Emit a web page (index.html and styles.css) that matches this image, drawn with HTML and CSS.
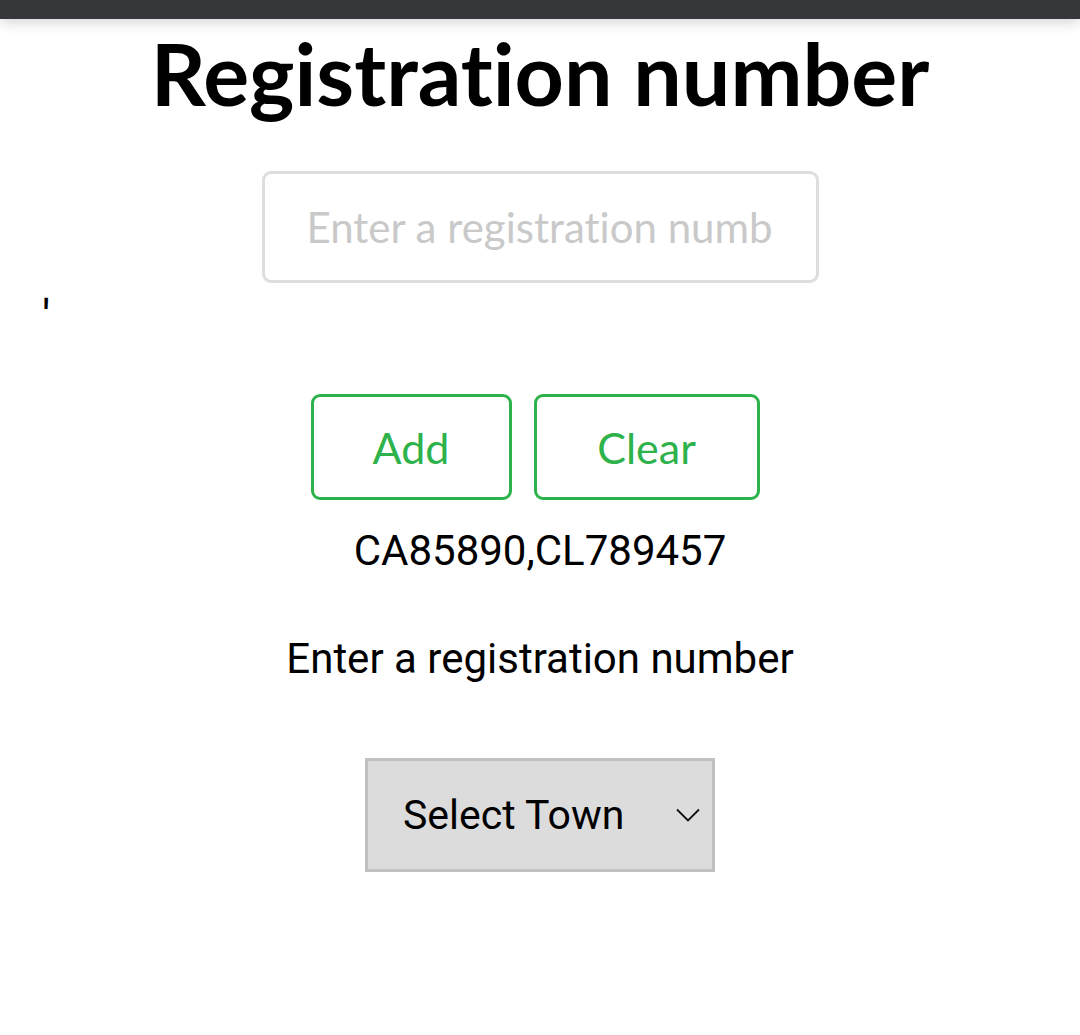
FILE: index.html
```html
<!DOCTYPE html>
<html>
<head>
<meta charset="utf-8">
<link rel="stylesheet" href="styles.css">
</head>
<body>
<div class="topbar"></div>
<main class="page">
  <h1 class="title">Registration number</h1>
  <input class="reg-input" type="text" placeholder="Enter a registration number">
  <div class="stray">'</div>
  <div class="actions">
    <button class="btn btn-add">Add</button>
    <button class="btn btn-clear">Clear</button>
  </div>
  <p class="regs">CA85890,CL789457</p>
  <p class="message">Enter a registration number</p>
  <div class="select-wrap">
    <div class="select">
      <span class="select-label">Select Town</span>
      <svg class="chevron" width="24" height="14" viewBox="0 0 24 14"><path d="M1 1.5 L12 12.5 L23 1.5" fill="none" stroke="#111" stroke-width="1.8"/></svg>
    </div>
  </div>
</main>
</body>
</html>
```
FILE: styles.css
```css
html, body {
  margin: 0;
  padding: 0;
  background: #ffffff;
}
.topbar {
  height: 19px;
  background: #36373b;
  box-shadow: 0 3px 14px rgba(0, 0, 0, 0.18);
  position: relative;
  z-index: 1;
}
.page {
  display: flex;
  flex-direction: column;
  align-items: center;
  font-variant-ligatures: none;
}
.title {
  margin: 4px 0 0;
  font-family: Lato, sans-serif;
  font-weight: 700;
  font-size: 86px;
  line-height: 100px;
  color: #000;
  font-variant-ligatures: none;
}
.reg-input {
  margin-top: 48px;
  box-sizing: border-box;
  width: 557px;
  height: 112px;
  border: 3px solid #dedede;
  border-radius: 9px;
  padding: 0 42px 0 42px;
  font-family: Lato, sans-serif;
  font-size: 42px;
  color: #000;
  outline: none;
  background: #fff;
  font-variant-ligatures: none;
}
.reg-input::placeholder {
  color: #c9c9c9;
}
.stray {
  align-self: flex-start;
  padding-left: 42px;
  margin-top: 15px;
  font-family: Roboto, sans-serif;
  font-size: 48px;
  line-height: 40px;
  height: 40px;
  color: #000;
}
.actions {
  margin-top: 56px;
  margin-right: 10px;
  display: flex;
  gap: 22px;
}
.btn {
  box-sizing: border-box;
  height: 106px;
  background: #fff;
  border: 3px solid #2eb24b;
  border-radius: 9px;
  color: #2eb24b;
  font-family: Lato, sans-serif;
  font-size: 43px;
  padding: 0;
  font-variant-ligatures: none;
}
.btn-add { width: 201px; }
.btn-clear { width: 226px; }
.regs, .message {
  margin: 0;
  font-family: Roboto, sans-serif;
  font-size: 42px;
  line-height: 50px;
  color: #000;
}
.regs { margin-top: 26px; }
.message { margin-top: 58px; }
.select-wrap {
  margin-top: 74px;
}
.select {
  box-sizing: border-box;
  width: 350px;
  height: 114px;
  background: #dcdcdc;
  border: 3px solid #c1c1c1;
  display: flex;
  align-items: center;
  padding-left: 35px;
  padding-right: 12px;
}
.select-label {
  flex: 1;
  font-family: Roboto, sans-serif;
  font-size: 41px;
  color: #000;
}
.chevron {
  display: block;
}
```
